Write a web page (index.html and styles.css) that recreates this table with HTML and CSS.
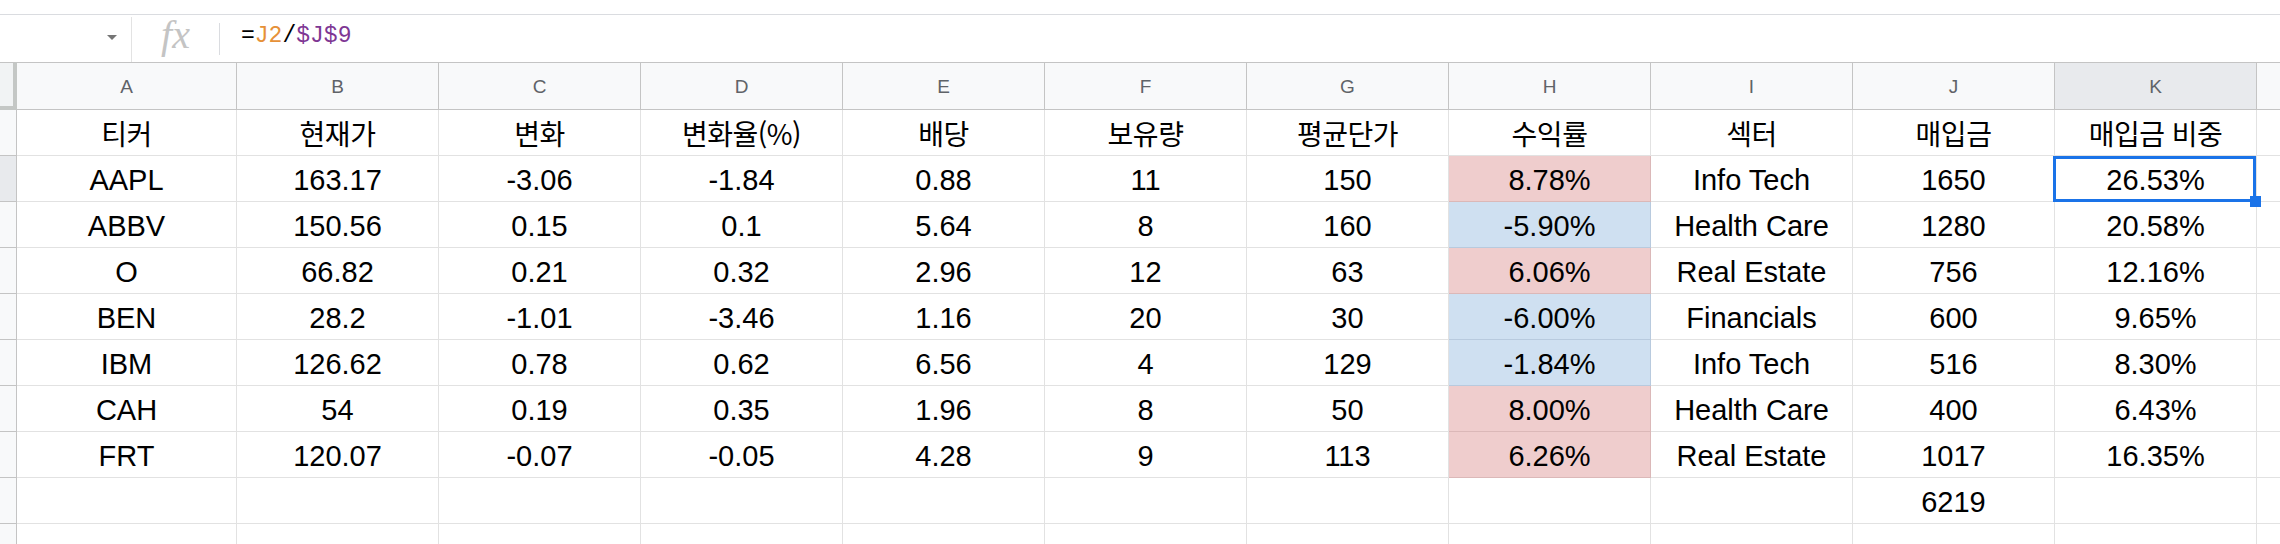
FILE: index.html
```html
<!DOCTYPE html>
<html lang="ko">
<head>
<meta charset="utf-8">
<title>Sheet</title>
<link rel="stylesheet" href="styles.css">
</head>
<body>
<div class="topgap"></div>
<div class="fbar">
  <div class="namebox"><span class="arrow"></span></div>
  <div class="fx">fx</div>
  <div class="fxsep"></div>
  <div class="formula"><span class="k">=</span><span class="ref1">J2</span><span class="k">/</span><span class="ref2">$J$9</span></div>
</div>
<div class="sheet">
  <div class="corner"></div>
  <div class="ch">A</div><div class="ch">B</div><div class="ch">C</div><div class="ch">D</div><div class="ch">E</div><div class="ch">F</div><div class="ch">G</div><div class="ch">H</div><div class="ch">I</div><div class="ch">J</div><div class="ch sel">K</div><div class="ch"></div>

  <div class="rh"></div>
  <div class="c ko">티커</div><div class="c ko">현재가</div><div class="c ko">변화</div><div class="c ko">변화율(%)</div><div class="c ko">배당</div><div class="c ko">보유량</div><div class="c ko">평균단가</div><div class="c ko">수익률</div><div class="c ko">섹터</div><div class="c ko">매입금</div><div class="c ko">매입금 비중</div><div class="c"></div>

  <div class="rh sel"></div>
  <div class="c">AAPL</div><div class="c">163.17</div><div class="c">-3.06</div><div class="c">-1.84</div><div class="c">0.88</div><div class="c">11</div><div class="c">150</div><div class="c pos">8.78%</div><div class="c">Info Tech</div><div class="c">1650</div><div class="c selcell">26.53%<span class="handle"></span></div><div class="c"></div>

  <div class="rh"></div>
  <div class="c">ABBV</div><div class="c">150.56</div><div class="c">0.15</div><div class="c">0.1</div><div class="c">5.64</div><div class="c">8</div><div class="c">160</div><div class="c neg">-5.90%</div><div class="c">Health Care</div><div class="c">1280</div><div class="c">20.58%</div><div class="c"></div>

  <div class="rh"></div>
  <div class="c">O</div><div class="c">66.82</div><div class="c">0.21</div><div class="c">0.32</div><div class="c">2.96</div><div class="c">12</div><div class="c">63</div><div class="c pos">6.06%</div><div class="c">Real Estate</div><div class="c">756</div><div class="c">12.16%</div><div class="c"></div>

  <div class="rh"></div>
  <div class="c">BEN</div><div class="c">28.2</div><div class="c">-1.01</div><div class="c">-3.46</div><div class="c">1.16</div><div class="c">20</div><div class="c">30</div><div class="c neg">-6.00%</div><div class="c">Financials</div><div class="c">600</div><div class="c">9.65%</div><div class="c"></div>

  <div class="rh"></div>
  <div class="c">IBM</div><div class="c">126.62</div><div class="c">0.78</div><div class="c">0.62</div><div class="c">6.56</div><div class="c">4</div><div class="c">129</div><div class="c neg">-1.84%</div><div class="c">Info Tech</div><div class="c">516</div><div class="c">8.30%</div><div class="c"></div>

  <div class="rh"></div>
  <div class="c">CAH</div><div class="c">54</div><div class="c">0.19</div><div class="c">0.35</div><div class="c">1.96</div><div class="c">8</div><div class="c">50</div><div class="c pos">8.00%</div><div class="c">Health Care</div><div class="c">400</div><div class="c">6.43%</div><div class="c"></div>

  <div class="rh"></div>
  <div class="c">FRT</div><div class="c">120.07</div><div class="c">-0.07</div><div class="c">-0.05</div><div class="c">4.28</div><div class="c">9</div><div class="c">113</div><div class="c pos">6.26%</div><div class="c">Real Estate</div><div class="c">1017</div><div class="c">16.35%</div><div class="c"></div>

  <div class="rh"></div>
  <div class="c"></div><div class="c"></div><div class="c"></div><div class="c"></div><div class="c"></div><div class="c"></div><div class="c"></div><div class="c"></div><div class="c"></div><div class="c">6219</div><div class="c"></div><div class="c"></div>

  <div class="rh"></div>
  <div class="c"></div><div class="c"></div><div class="c"></div><div class="c"></div><div class="c"></div><div class="c"></div><div class="c"></div><div class="c"></div><div class="c"></div><div class="c"></div><div class="c"></div><div class="c"></div>
</div>
</body>
</html>
```

FILE: styles.css
```css
* { box-sizing: border-box; }

html, body {
  margin: 0;
  padding: 0;
  background: #ffffff;
}

body {
  width: 2280px;
  height: 544px;
  overflow: hidden;
  font-family: "Liberation Sans", "Noto Sans CJK KR", sans-serif;
  color: #000;
}

.topgap {
  height: 15px;
  border-bottom: 1px solid #dadce0;
}

.fbar {
  height: 47px;
  display: flex;
  align-items: stretch;
}

.namebox {
  width: 132px;
  margin-top: 2px;
  border-right: 1px solid #e3e3e3;
  display: flex;
  align-items: center;
  justify-content: flex-end;
  padding-right: 14px;
  padding-bottom: 4px;
}

.arrow {
  width: 0;
  height: 0;
  border-left: 5px solid transparent;
  border-right: 5px solid transparent;
  border-top: 5px solid #757575;
}

.fx {
  width: 87px;
  display: flex;
  align-items: center;
  justify-content: center;
  font-family: "Liberation Serif", serif;
  font-style: italic;
  font-size: 40px;
  color: #c4c4c4;
  padding-bottom: 8px;
}

.fxsep {
  width: 1px;
  margin: 8px 0 7px;
  background: #dadce0;
}

.formula {
  padding-left: 21px;
  display: flex;
  align-items: center;
  font-family: "Liberation Mono", monospace;
  font-size: 23px;
  padding-bottom: 6px;
}

.formula .k { color: #000; }
.formula .ref1 { color: #e69138; }
.formula .ref2 { color: #7e3794; }

.sheet {
  display: grid;
  grid-template-columns: 17px 220px repeat(10, 202px) 40px;
  grid-template-rows: 48px;
  grid-auto-rows: 46px;
}

.corner {
  background: #f1f3f4;
  border-top: 1px solid #c4c4c4;
  border-right: 4px solid #c4c7c5;
  border-bottom: 4px solid #c4c7c5;
}

.ch {
  background: #f8f9fa;
  border-top: 1px solid #c4c4c4;
  border-right: 1px solid #c4c4c4;
  border-bottom: 1px solid #c4c4c4;
  display: flex;
  align-items: center;
  justify-content: center;
  font-family: "Liberation Sans", sans-serif;
  font-size: 19px;
  color: #5f6368;
  padding-top: 2px;
}

.ch.sel { background: #e8eaed; }

.rh {
  background: #f8f9fa;
  border-right: 1px solid #c4c4c4;
  border-bottom: 1px solid #c4c4c4;
}

.rh.sel { background: #e8eaed; }

.c {
  border-right: 1px solid #e2e2e2;
  border-bottom: 1px solid #e2e2e2;
  display: flex;
  align-items: center;
  justify-content: center;
  font-size: 29px;
  white-space: nowrap;
  padding-top: 3px;
}

.c.ko {
  font-family: "Noto Sans CJK KR", "Liberation Sans", sans-serif;
  font-size: 28px;
  letter-spacing: -0.5px;
  padding-top: 1px;
}

.c.pos {
  background: #efcdcd;
  border-color: #dbb8b8;
}

.c.neg {
  background: #cfe0f1;
  border-color: #b8cade;
}

.selcell {
  position: relative;
}

.selcell::after {
  content: "";
  position: absolute;
  left: -2px;
  top: 0;
  right: 0;
  bottom: -1px;
  border: 3px solid #1a73e8;
}

.handle {
  position: absolute;
  right: -5px;
  bottom: -6px;
  width: 11px;
  height: 11px;
  background: #1a73e8;
  z-index: 2;
}
```
